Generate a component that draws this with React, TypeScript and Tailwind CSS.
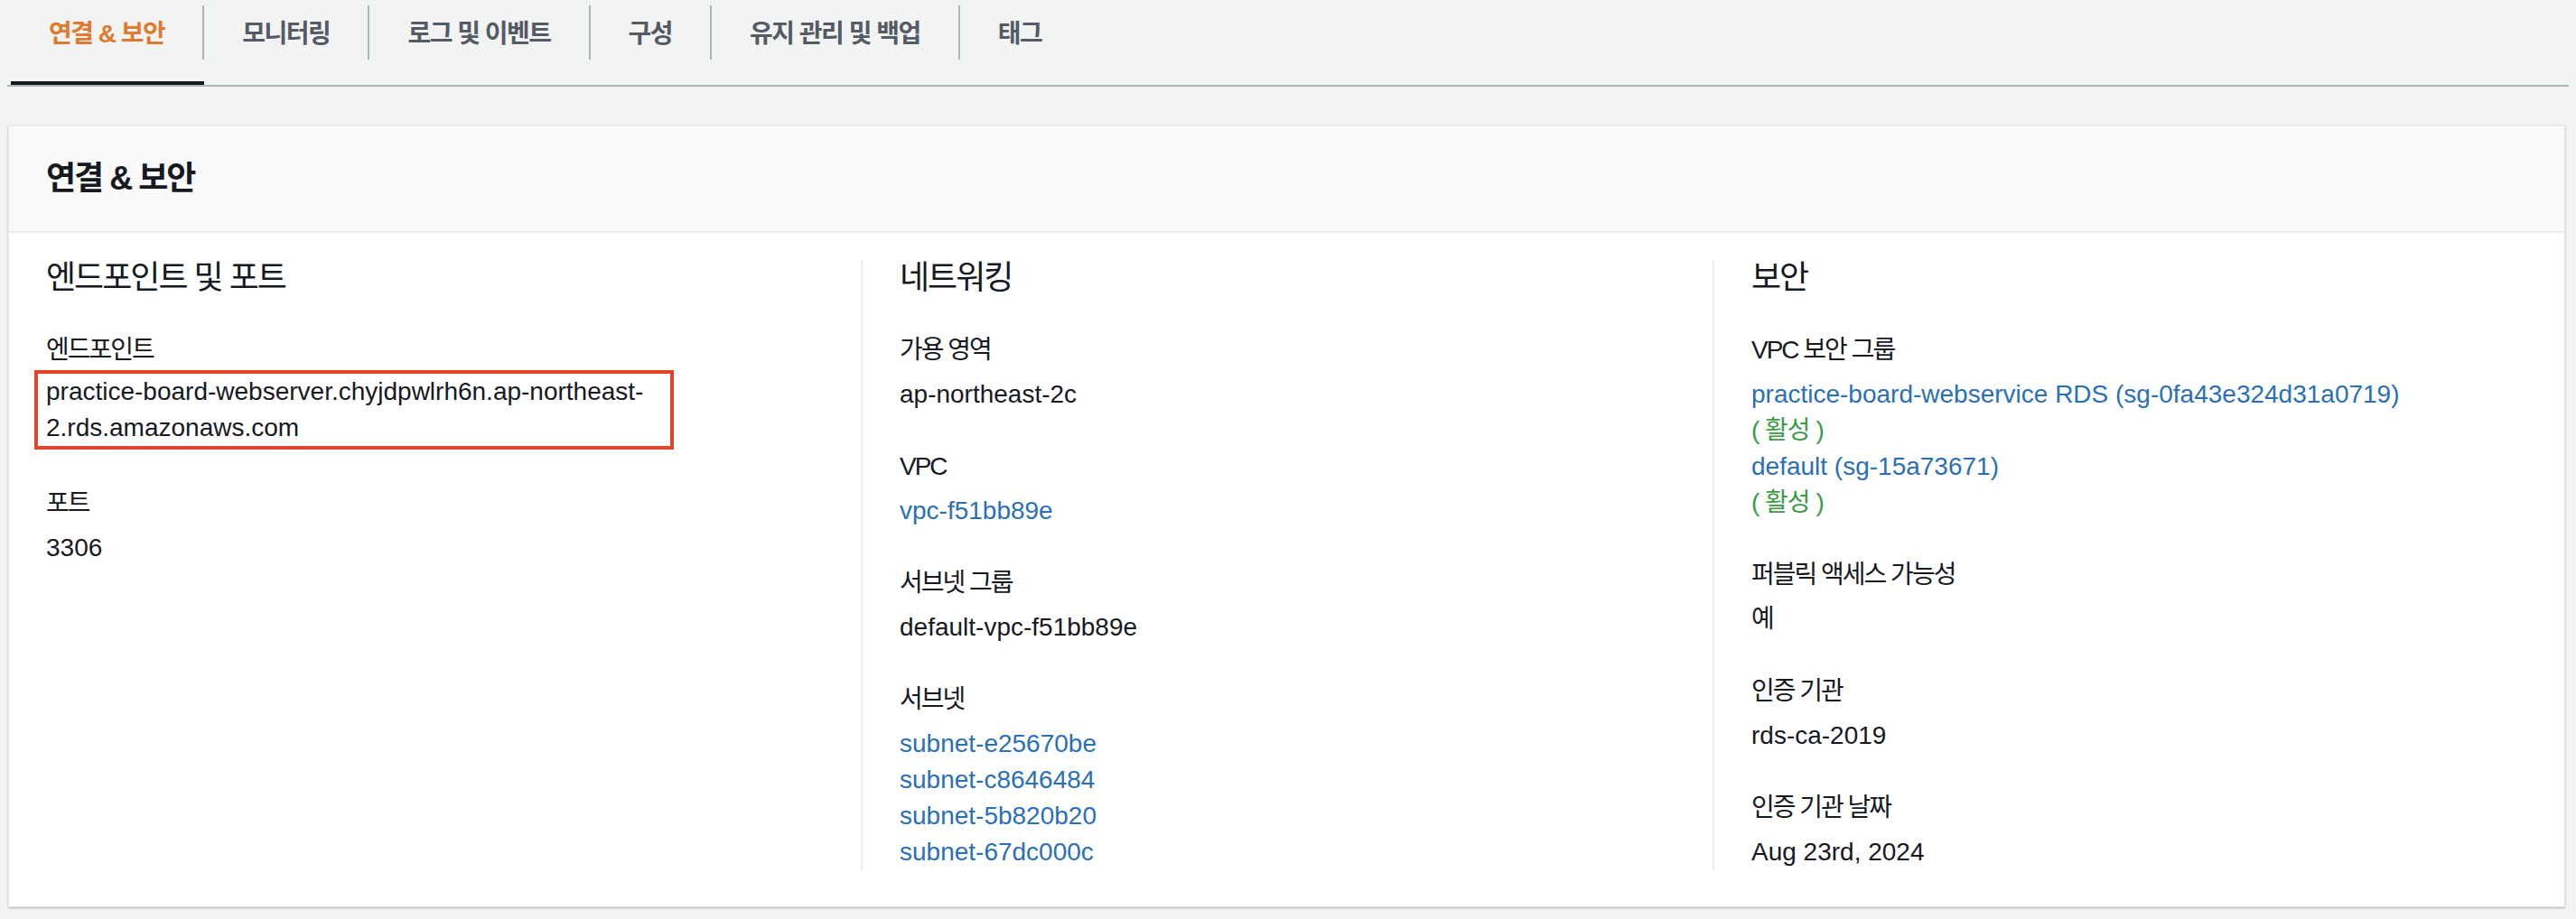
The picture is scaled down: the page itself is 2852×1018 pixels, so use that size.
import { ReactNode } from "react";

const tabs = ["연결 & 보안", "모니터링", "로그 및 이벤트", "구성", "유지 관리 및 백업", "태그"];

function Label({ children }: { children: ReactNode }) {
  return <p className="text-[28px] leading-[40px] tracking-[-2px] text-[#16191f]">{children}</p>;
}

function Value({ children }: { children: ReactNode }) {
  return <div className="mt-[9px] text-[28px] leading-[40px] text-[#16191f]">{children}</div>;
}

function Link({ children }: { children: ReactNode }) {
  return <a className="block text-[#2b6fb6]">{children}</a>;
}

function Active() {
  return <p className="tracking-[-1px] text-[#3d9a46]">( 활성 )</p>;
}

function Column({ title, first, children }: { title: string; first?: boolean; children: ReactNode }) {
  return (
    <div className={`flex flex-col gap-10 px-[41px] ${first ? "" : "border-l-2 border-[#eaeded]"}`}>
      <h3 className="text-[36px] leading-[40px] tracking-[-2px] text-[#16191f]">{title}</h3>
      {children}
    </div>
  );
}

export default function App() {
  return (
    <div className="min-h-screen bg-[#f2f3f3] px-[8px] font-['Liberation_Sans','Noto_Sans_CJK_KR',sans-serif] text-[#16191f]">
      <div className="flex border-b-2 border-[#aab7b8] pl-[4px]">
        {tabs.map((tab, i) => (
          <button
            key={tab}
            className={`flex h-[94px] flex-col border-b-4 ${i === 0 ? "border-[#16191f]" : "border-transparent"}`}
          >
            <span
              className={`mt-[6px] flex h-[60px] items-center px-[42px] pt-[4px] text-[28px] font-bold tracking-[-1.5px] ${
                i === 0 ? "text-[#e07a2f]" : "text-[#545b64]"
              } ${i < tabs.length - 1 ? "border-r-2 border-[#aab7b8]" : ""}`}
            >
              {tab}
            </span>
          </button>
        ))}
      </div>

      <section className="mt-[43px] ml-[1px] mr-[4px] border border-[#e3e6e6] bg-white shadow-[0_1px_2px_rgba(0,28,36,0.3)]">
        <div className="flex h-[118px] items-center border-b-2 border-[#eaeded] bg-[#fafafa] px-[41px]">
          <h2 className="text-[36px] font-bold tracking-[-2px]">연결 &amp; 보안</h2>
        </div>

        <div className="grid grid-cols-3 pt-[30px] pb-[40px]">
          <Column title="엔드포인트 및 포트" first>
            <div>
              <Label>엔드포인트</Label>
              <div className="mt-[2px] -ml-[13px] w-[708px] border-4 border-[#e5432b] pl-[9px] text-[28px] leading-[40px]">
                practice-board-webserver.chyjdpwlrh6n.ap-northeast-
                <br />
                2.rds.amazonaws.com
              </div>
            </div>
            <div>
              <Label>포트</Label>
              <Value>3306</Value>
            </div>
          </Column>

          <Column title="네트워킹">
            <div>
              <Label>가용 영역</Label>
              <Value>ap-northeast-2c</Value>
            </div>
            <div>
              <Label>VPC</Label>
              <Value>
                <Link>vpc-f51bb89e</Link>
              </Value>
            </div>
            <div>
              <Label>서브넷 그룹</Label>
              <Value>default-vpc-f51bb89e</Value>
            </div>
            <div>
              <Label>서브넷</Label>
              <Value>
                <Link>subnet-e25670be</Link>
                <Link>subnet-c8646484</Link>
                <Link>subnet-5b820b20</Link>
                <Link>subnet-67dc000c</Link>
              </Value>
            </div>
          </Column>

          <Column title="보안">
            <div>
              <Label>VPC 보안 그룹</Label>
              <Value>
                <Link>practice-board-webservice RDS (sg-0fa43e324d31a0719)</Link>
                <Active />
                <Link>default (sg-15a73671)</Link>
                <Active />
              </Value>
            </div>
            <div>
              <Label>퍼블릭 액세스 가능성</Label>
              <Value>예</Value>
            </div>
            <div>
              <Label>인증 기관</Label>
              <Value>rds-ca-2019</Value>
            </div>
            <div>
              <Label>인증 기관 날짜</Label>
              <Value>Aug 23rd, 2024</Value>
            </div>
          </Column>
        </div>
      </section>
    </div>
  );
}
